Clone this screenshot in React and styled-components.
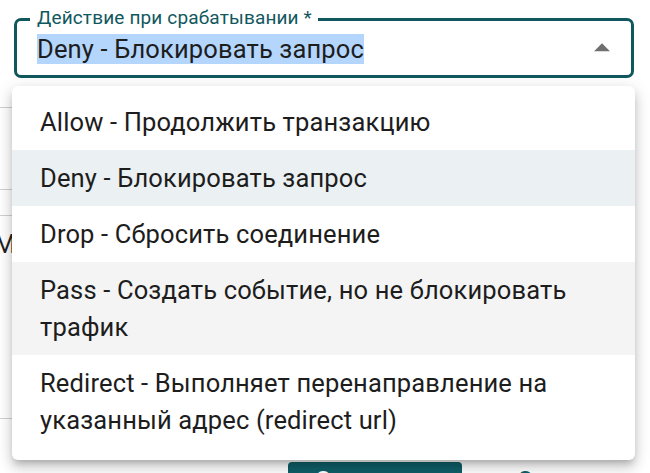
import React from 'react';
import styled, { createGlobalStyle } from 'styled-components';

const GlobalStyle = createGlobalStyle`
  html, body {
    margin: 0;
    padding: 0;
    background: #ffffff;
    font-family: Roboto, "Liberation Sans", sans-serif;
  }
`;

const Page = styled.div`
  position: relative;
  width: 650px;
  height: 473px;
  overflow: hidden;
  background: #ffffff;
`;

const Form = styled.div`
  display: flex;
  flex-direction: column;
  padding-top: 18px;
`;

const Field = styled.div`
  position: relative;
  margin: 0 16px 0 14px;
  height: 60px;
  box-sizing: border-box;
  border: 3px solid #11585e;
  border-radius: 7px;
  display: flex;
  align-items: center;
  padding: 0 10px 0 20px;
`;

const FieldLabel = styled.span`
  position: absolute;
  top: -14px;
  left: 13px;
  padding: 0 6px 0 7px;
  background: #ffffff;
  color: #11585e;
  font-size: 19px;
  letter-spacing: 0.15px;
  line-height: 22px;
`;

const Value = styled.div`
  flex: 1;
  font-size: 25.5px;
  letter-spacing: 0.15px;
  line-height: 30px;
  color: #1d1d1d;
  padding-top: 2px;
`;

const Selected = styled.span`
  background: #b4d5fc;
`;

const Arrow = styled.svg`
  width: 38px;
  height: 38px;
  fill: #6f6f6f;
`;

const Row = styled.div`
  height: ${p => p.h}px;
  border-bottom: 1px solid #cfcfcf;
  box-sizing: border-box;
  margin-right: 40px;
`;

const RowText = styled.div`
  margin: 14px 0 0 -6px;
  font-size: 25px;
  color: #222;
`;

const Footer = styled.div`
  display: flex;
  gap: 39px;
  margin: 43px 0 0 288px;
`;

const Button = styled.div`
  width: ${p => (p.primary ? '174px' : 'auto')};
  height: 44px;
  box-sizing: border-box;
  display: flex;
  padding-top: 4px;
  border-radius: 4px;
  font-size: 24px;
  font-weight: 500;
  background: ${p => (p.primary ? '#0f5f68' : 'transparent')};
  color: ${p => (p.primary ? '#ffffff' : '#0f5f68')};
  justify-content: ${p => (p.primary ? 'center' : 'flex-start')};
  padding-left: ${p => (p.primary ? '0' : '16px')};
`;

// the open popover lies over the form
const Menu = styled.ul`
  position: absolute;
  top: 86px;
  left: 12px;
  width: 623px;
  box-sizing: border-box;
  margin: 0;
  padding: 8px 0 12px;
  list-style: none;
  background: #ffffff;
  border-radius: 6px;
  box-shadow: 0 5px 6px -3px rgba(0, 0, 0, 0.2), 0 8px 12px 1px rgba(0, 0, 0, 0.12),
    0 3px 16px 2px rgba(0, 0, 0, 0.1);
`;

const Item = styled.li`
  padding: 9.5px 28px;
  font-size: 25.5px;
  letter-spacing: 0.15px;
  line-height: 37px;
  color: #1d1d1d;
  background: ${p => (p.selected ? '#ebf0f2' : p.hover ? '#f4f4f4' : 'transparent')};
`;

const options = [
  { text: 'Allow - Продолжить транзакцию' },
  { text: 'Deny - Блокировать запрос', selected: true },
  { text: 'Drop - Сбросить соединение' },
  { text: 'Pass - Создать событие, но не блокировать трафик', hover: true },
  { text: 'Redirect - Выполняет перенаправление на указанный адрес (redirect url)' },
];

export default function App() {
  return (
    <Page>
      <GlobalStyle />
      <Form>
        <Field>
          <FieldLabel>Действие при срабатывании *</FieldLabel>
          <Value>
            <Selected>Deny - Блокировать запрос</Selected>
          </Value>
          <Arrow viewBox="0 0 24 24">
            <path d="M7 14l5-5 5 5z" />
          </Arrow>
        </Field>
        <Row h={30} />
        <Row h={82} />
        <Row h={26} />
        <Row h={203}>
          <RowText>Максимальное</RowText>
        </Row>
        <Footer>
          <Button primary>Сохранить</Button>
          <Button>Отмена</Button>
        </Footer>
      </Form>
      <Menu>
        {options.map(o => (
          <Item key={o.text} selected={o.selected} hover={o.hover}>
            {o.text}
          </Item>
        ))}
      </Menu>
    </Page>
  );
}
